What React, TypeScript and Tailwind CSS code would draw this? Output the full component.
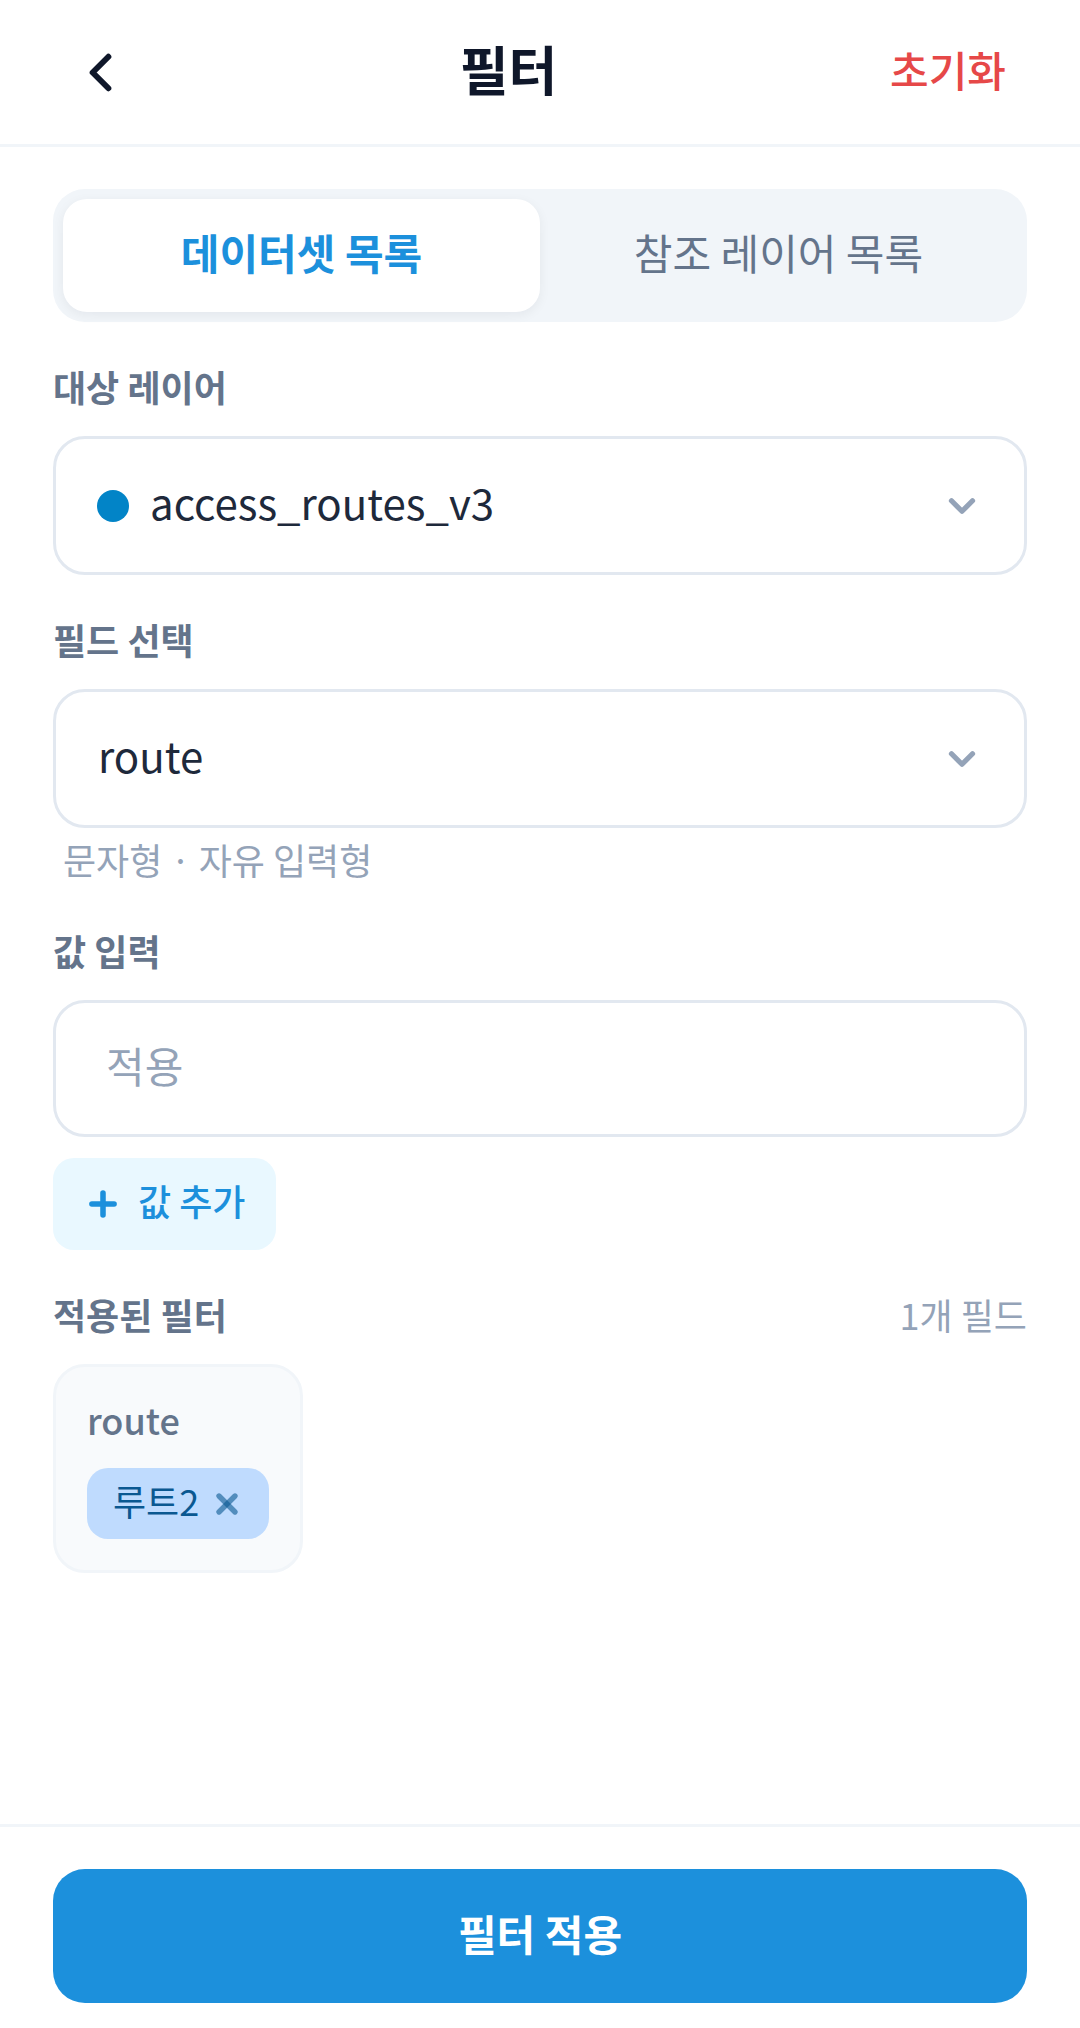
import { useState } from "react"
import { ChevronDown, ChevronLeft, Plus, X } from "lucide-react"

const TABS = ["데이터셋 목록", "참조 레이어 목록"]

const labelClass = "block text-[36px] leading-[44px] font-bold text-[#64748b]"
const fieldClass =
  "block w-full appearance-none rounded-[32px] border-3 border-[#e2e8f0] bg-white pb-2 text-[42px] text-[#1e293b] outline-none placeholder:text-[#94a3b8]"

const SelectChevron = () => (
  <ChevronDown
    size={42}
    strokeWidth={3}
    className="pointer-events-none absolute top-1/2 right-11 -translate-y-1/2 text-[#94a3b8]"
  />
)

export default function App() {
  const [tab, setTab] = useState(0)
  const [value, setValue] = useState("")
  const [values, setValues] = useState(["루트2"])

  const addValue = () => {
    const next = value.trim()
    if (!next || values.includes(next)) return
    setValues([...values, next])
    setValue("")
  }

  return (
    <div className="flex min-h-screen flex-col bg-white font-['Noto_Sans_CJK_KR',sans-serif]">
      <header className="flex h-[147px] items-center justify-between border-b-3 border-[#f1f5f9] px-[53px]">
        <button type="button" aria-label="뒤로" className="p-4 text-[#0f172a]">
          <ChevronLeft size={63} strokeWidth={2.25} />
        </button>
        <h1 className="pb-2 text-[53px] leading-[72px] font-bold text-[#0f172a]">필터</h1>
        <button
          type="button"
          onClick={() => setValues([])}
          className="px-[21px] pb-2 text-[42px] font-medium text-[#e64848]"
        >
          초기화
        </button>
      </header>

      <main className="flex flex-1 flex-col gap-[42px] px-[53px] py-[42px]">
        <div className="flex h-[133px] rounded-[32px] bg-[#f1f5f9] p-[10px]">
          {TABS.map((name, i) => (
            <button
              key={name}
              type="button"
              onClick={() => setTab(i)}
              className={
                tab === i
                  ? "flex-1 rounded-3xl bg-white pb-2 text-[42px] font-bold text-[#1c90dc] shadow-[0_3px_12px_rgba(15,23,42,0.06)]"
                  : "flex-1 rounded-3xl pb-2 text-[42px] text-[#64748b]"
              }
            >
              {name}
            </button>
          ))}
        </div>

        <div>
          <label htmlFor="layer" className={labelClass}>
            대상 레이어
          </label>
          <div className="relative mt-7">
            <span className="pointer-events-none absolute top-1/2 left-11 size-8 -translate-y-1/2 rounded-full bg-[#0284c7]" />
            <select id="layer" className={`${fieldClass} h-[139px] pr-[100px] pl-[94px]`}>
              <option>access_routes_v3</option>
            </select>
            <SelectChevron />
          </div>
        </div>

        <div>
          <label htmlFor="field" className={labelClass}>
            필드 선택
          </label>
          <div className="relative mt-7">
            <select id="field" className={`${fieldClass} h-[139px] pr-[100px] pl-[42px]`}>
              <option>route</option>
            </select>
            <SelectChevron />
          </div>
          <p className="mt-1 px-[10px] text-[36px] leading-[54px] text-[#94a3b8]">문자형 · 자유 입력형</p>
        </div>

        <div>
          <label htmlFor="value" className={labelClass}>
            값 입력
          </label>
          <input
            id="value"
            type="text"
            placeholder="적용"
            value={value}
            onChange={(e) => setValue(e.target.value)}
            className={`${fieldClass} mt-7 h-[137px] px-[50px]`}
          />
          <button
            type="button"
            onClick={addValue}
            className="mt-[21px] flex h-[92px] items-center gap-4 rounded-[21px] bg-[#e9f8ff] px-[31px] text-[36px] font-medium text-[#1c90dc]"
          >
            <Plus size={38} strokeWidth={3.5} />
            <span className="pb-2">값 추가</span>
          </button>
        </div>

        <section>
          <div className="flex items-center justify-between">
            <h2 className={labelClass}>적용된 필터</h2>
            <span className="text-[36px] leading-[44px] text-[#94a3b8]">{values.length ? 1 : 0}개 필드</span>
          </div>
          {values.length > 0 && (
            <div className="mt-7 inline-block rounded-[32px] border-3 border-[#f1f5f9] bg-[#f8fafc] p-[31px]">
              <p className="text-[36px] leading-[42px] font-medium text-[#64748b]">route</p>
              <div className="mt-7 flex flex-wrap gap-4">
                {values.map((v) => (
                  <span
                    key={v}
                    className="flex h-[71px] items-center gap-3 rounded-[21px] bg-[#bfdbfe] px-[26px] text-[36px] text-[#0a5891]"
                  >
                    <span className="pb-2">{v}</span>
                    <button
                      type="button"
                      aria-label={`${v} 삭제`}
                      onClick={() => setValues(values.filter((x) => x !== v))}
                      className="text-[#0a5891]/60"
                    >
                      <X size={32} strokeWidth={4} />
                    </button>
                  </span>
                ))}
              </div>
            </div>
          )}
        </section>
      </main>

      <footer className="border-t-3 border-[#f1f5f9] px-[53px] pt-[42px] pb-[25px]">
        <button
          type="button"
          className="h-[134px] w-full rounded-[32px] bg-[#1c90dc] pb-2 text-[42px] font-bold text-white"
        >
          필터 적용
        </button>
      </footer>
    </div>
  )
}
